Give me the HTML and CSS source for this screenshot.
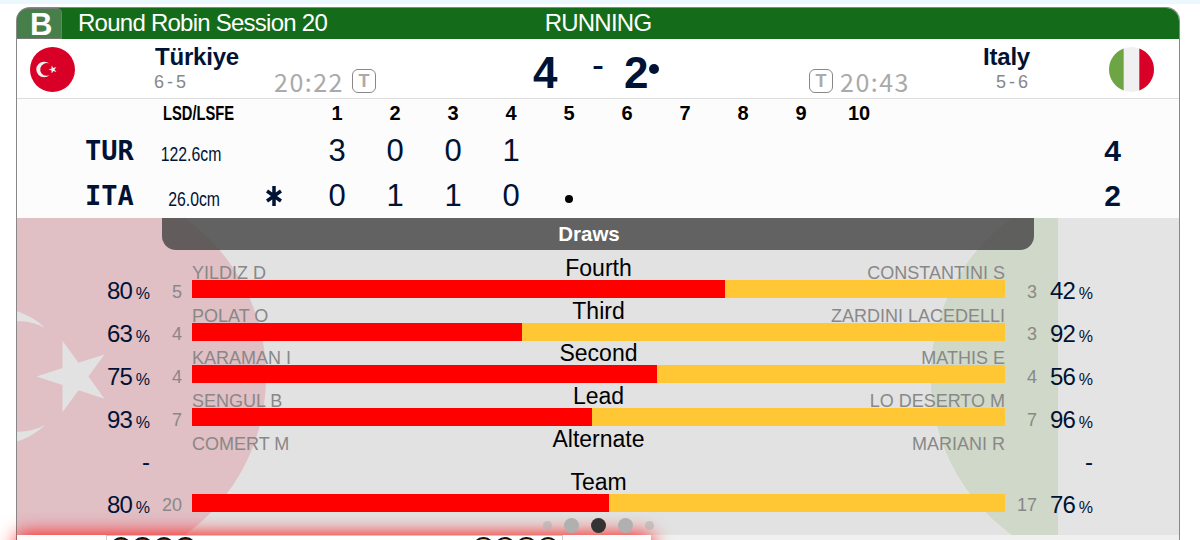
FILE: index.html
```
<!DOCTYPE html>
<html lang="en">
<head>
    <meta charset="UTF-8">
    <meta name="viewport" content="width=device-width, initial-scale=1.0">
    <title>Round Robin Session 20</title>
    <link rel="stylesheet" href="styles.css">
</head>
<body>
    <div class="game">
        <div class="game-header">
            <div class="sheet">B</div>
            <div class="session">Round Robin Session 20</div>
            <div class="status">RUNNING</div>
        </div>

        <div class="match">
            <svg class="flag" viewBox="0 0 512 512">
                <circle cx="256" cy="256" r="256" fill="#d80027"/>
                <g fill="#f0f0f0">
                    <path d="M245.5 209.2l21 28.9 34-11-21 28.9 21 29-34-11.1-21 28.9v-35.8l-34-11 34-11.1z"/>
                    <path d="M188.2 328.3a72.3 72.3 0 1 1 34.4-136 89 89 0 1 0 0 127.3a72 72 0 0 1-34.4 8.7z"/>
                </g>
            </svg>
            <div class="team">
                <div class="team-name">Türkiye</div>
                <div class="record">6 - 5</div>
            </div>
            <div class="clock"><span>20:22</span><span class="timeout">T</span></div>
            <div class="score">
                <span class="points">4</span>
                <span class="dash">-</span>
                <span class="points">2</span>
                <span class="hammer"></span>
            </div>
            <div class="clock"><span class="timeout">T</span><span>20:43</span></div>
            <div class="team team-right">
                <div class="team-name">Italy</div>
                <div class="record">5 - 6</div>
            </div>
            <svg class="flag" viewBox="0 0 512 512">
                <circle cx="256" cy="256" r="256" fill="#f0f0f0"/>
                <path d="M167 16a256 256 0 0 0 0 480z" fill="#6da544"/>
                <path d="M345 16a256 256 0 0 1 0 480z" fill="#d80027"/>
            </svg>
        </div>

        <div class="ends">
            <div class="ends-row ends-head">
                <span></span><span class="lsd">LSD/LSFE</span><span></span>
                <span>1</span><span>2</span><span>3</span><span>4</span><span>5</span>
                <span>6</span><span>7</span><span>8</span><span>9</span><span>10</span>
            </div>
            <div class="ends-row">
                <span class="code">TUR</span><span class="lsd">122.6cm</span><span></span>
                <span>3</span><span>0</span><span>0</span><span>1</span><span></span>
                <span></span><span></span><span></span><span></span><span></span>
                <span class="total">4</span>
            </div>
            <div class="ends-row">
                <span class="code">ITA</span><span class="lsd">26.0cm</span>
                <span class="star"><svg width="16" height="20" viewBox="0 0 16 20"><path d="M8 0v20M1 5l14 10M15 5L1 15"/></svg></span>
                <span>0</span><span>1</span><span>1</span><span>0</span><span class="current"><i></i></span>
                <span></span><span></span><span></span><span></span><span></span>
                <span class="total">2</span>
            </div>
        </div>

        <div class="stats">
            <svg class="backdrop backdrop-left" viewBox="0 0 512 512">
                <path fill-rule="evenodd" fill="#d80027" d="M256 0a256 256 0 1 1 0 512a256 256 0 1 1 0-512zM245.5 209.2l21 28.9 34-11-21 28.9 21 29-34-11.1-21 28.9v-35.8l-34-11 34-11.1zM188.2 328.3a72.3 72.3 0 1 1 34.4-136 89 89 0 1 0 0 127.3a72 72 0 0 1-34.4 8.7z"/>
            </svg>
            <svg class="backdrop backdrop-right" viewBox="0 0 512 512">
                <circle cx="256" cy="256" r="256" fill="#f0f0f0"/>
                <path d="M169 16a256 256 0 0 0 0 480z" fill="#6da544"/>
            </svg>

            <div class="stats-title">Draws</div>

            <div class="stat">
                <div class="pct">80<small>%</small></div>
                <div class="count">5</div>
                <div class="duel">
                    <div class="names"><span>YILDIZ D</span><b>Fourth</b><span>CONSTANTINI S</span></div>
                    <div class="bar"><div class="fill" style="width: 65.57%"></div></div>
                </div>
                <div class="count">3</div>
                <div class="pct">42<small>%</small></div>
            </div>
            <div class="stat">
                <div class="pct">63<small>%</small></div>
                <div class="count">4</div>
                <div class="duel">
                    <div class="names"><span>POLAT O</span><b>Third</b><span>ZARDINI LACEDELLI</span></div>
                    <div class="bar"><div class="fill" style="width: 40.65%"></div></div>
                </div>
                <div class="count">3</div>
                <div class="pct">92<small>%</small></div>
            </div>
            <div class="stat">
                <div class="pct">75<small>%</small></div>
                <div class="count">4</div>
                <div class="duel">
                    <div class="names"><span>KARAMAN I</span><b>Second</b><span>MATHIS E</span></div>
                    <div class="bar"><div class="fill" style="width: 57.25%"></div></div>
                </div>
                <div class="count">4</div>
                <div class="pct">56<small>%</small></div>
            </div>
            <div class="stat">
                <div class="pct">93<small>%</small></div>
                <div class="count">7</div>
                <div class="duel">
                    <div class="names"><span>SENGUL B</span><b>Lead</b><span>LO DESERTO M</span></div>
                    <div class="bar"><div class="fill" style="width: 49.21%"></div></div>
                </div>
                <div class="count">7</div>
                <div class="pct">96<small>%</small></div>
            </div>
            <div class="stat">
                <div class="pct">-</div>
                <div class="count"></div>
                <div class="duel">
                    <div class="names"><span>COMERT M</span><b>Alternate</b><span>MARIANI R</span></div>
                </div>
                <div class="count"></div>
                <div class="pct">-</div>
            </div>
            <div class="stat">
                <div class="pct">80<small>%</small></div>
                <div class="count">20</div>
                <div class="duel">
                    <div class="names"><span></span><b>Team</b><span></span></div>
                    <div class="bar"><div class="fill" style="width: 51.28%"></div></div>
                </div>
                <div class="count">17</div>
                <div class="pct">76<small>%</small></div>
            </div>

            <div class="pager">
                <i class="tiny"></i><i></i><i class="active"></i><i></i><i class="tiny"></i>
            </div>
        </div>

        <div class="footer">
            <div class="live">
                <div class="stones">
                    <div class="stone-set"><i></i><i></i><i></i><i></i></div>
                    <div class="stone-set yellow"><i></i><i></i><i></i><i></i></div>
                </div>
            </div>
        </div>
    </div>
</body>
</html>
```
FILE: styles.css
```
* {
    box-sizing: border-box;
}

body {
    margin: 0;
    height: 540px;
    overflow: hidden;
    border-top: 4px solid #ebf9ff;
    background: #fff;
    color: #001335;
    font-family: Arial, "Liberation Sans", sans-serif;
}

.game {
    width: 1164px;
    height: 533px;
    margin: 3px 0 0 16px;
    border: 1px solid #888;
    border-bottom: none;
    border-radius: 14px 14px 0 0;
    background: #fff;
}

/* green title bar */
.game-header {
    display: grid;
    grid-template-columns: 45px 476px 120px 1fr;
    height: 31px;
    background: #146c1a;
    border-radius: 13px 13px 0 0;
    color: #fff;
    font-size: 24px;
    letter-spacing: -0.75px;
    line-height: 30px;
}

.sheet {
    height: 31px;
    padding-left: 13px;
    border: 1px solid #777;
    border-left: none;
    border-radius: 12px 5px 0 0;
    background: #467f49;
    font-size: 31px;
    font-weight: bold;
    line-height: 32px;
}

.session {
    padding-left: 16px;
    white-space: nowrap;
}

.status {
    text-align: center;
}

/* teams and score */
.match {
    display: grid;
    grid-template-columns: 45px 199px 102px 433px 101px 199px 45px;
    height: 60px;
    padding: 8px 0 0 13px;
    border-bottom: 1px solid #ddd;
}

.flag {
    width: 45px;
    height: 45px;
}

.team {
    padding-left: 79px;
}

.team-right {
    padding: 0 78px 0 0;
    text-align: right;
}

.team-name {
    padding: 0 1px;
    font-size: 24px;
    font-weight: bold;
    letter-spacing: -0.2px;
    line-height: 20px;
}

.record {
    margin-top: 5px;
    padding-right: 3px;
    color: #888;
    font-size: 18px;
    line-height: 20px;
    word-spacing: -2px;
}

.clock {
    display: flex;
    align-items: center;
    justify-content: space-between;
    height: 26px;
    margin-top: 21px;
    color: #aaa;
    font-family: "Noto Sans CJK JP", sans-serif;
    font-size: 25px;
    letter-spacing: 1.5px;
    line-height: 24px;
    white-space: nowrap;
}

.timeout {
    width: 24px;
    height: 24px;
    border: 1px solid #888;
    border-radius: 6px;
    font: bold 18px/23px "Liberation Sans", sans-serif;
    letter-spacing: 0;
    text-align: center;
}

.score {
    display: flex;
    padding-left: 157px;
}

.points {
    width: 25px;
    font-size: 44px;
    font-weight: bold;
    line-height: 51px;
}

.dash {
    width: 66px;
    padding-left: 14px;
    text-align: center;
    font-size: 36px;
    line-height: 35px;
}

.hammer {
    width: 10px;
    height: 10px;
    margin-top: 17px;
    border-radius: 50%;
    background: #001335;
}

/* end by end */
.ends {
    background: #fcfcfc;
}

.ends-row {
    display: grid;
    grid-template-columns: 128px 75px 88px repeat(10, 58px) 1fr;
    height: 45px;
    font-size: 31px;
    line-height: 45px;
    text-align: center;
}

.ends-row.ends-head {
    height: 29px;
    color: #000;
    font-size: 20px;
    font-weight: bold;
    line-height: 29px;
}

.ends-row .code {
    padding-left: 68px;
    font-family: "DejaVu Sans Mono", monospace;
    font-size: 27px;
    font-weight: bold;
    text-align: left;
}

.ends-row .lsd {
    font-size: 20px;
    line-height: 52px;
    text-align: right;
    transform: scaleX(0.79);
    transform-origin: right;
}

.ends-head .lsd {
    justify-self: start;
    margin-left: 18px;
    line-height: 29px;
    transform: scaleX(0.735);
    transform-origin: left;
}

.star {
    padding-left: 20px;
}

.star path {
    stroke: #001335;
    stroke-width: 3.5;
}

.current {
    display: flex;
    align-items: center;
    justify-content: center;
}

.current i {
    width: 8px;
    height: 8px;
    border-radius: 50%;
    background: #000;
}

.total {
    padding-right: 58px;
    font-size: 30px;
    font-weight: bold;
    text-align: right;
}

/* statistics slide */
.stats {
    position: relative;
    height: 317px;
    overflow: hidden;
    background: #e2e2e2;
}

.backdrop {
    position: absolute;
    top: -37px;
    width: 391px;
    height: 391px;
    opacity: 0.15;
}

.backdrop-left {
    left: -142px;
}

.backdrop-right {
    left: 912px;
}

.stats-title {
    position: relative;
    width: 872px;
    height: 32px;
    margin: 0 0 5px 145px;
    padding-right: 18px;
    border-radius: 0 0 14px 14px;
    background: rgba(69, 69, 69, 0.82);
    color: #fff;
    font-size: 20.5px;
    font-weight: bold;
    line-height: 32px;
    text-align: center;
}

.stat {
    position: relative;
    display: grid;
    grid-template-columns: 132px 33px 823px 32px 55px;
    height: 42.74px;
}

.pct {
    padding-top: 24.4px;
    font-size: 24px;
    letter-spacing: -1px;
    line-height: 24px;
    text-align: right;
}

.pct small {
    margin-left: 4px;
    font-size: 16px;
}

.count {
    padding-top: 26.6px;
    color: #888;
    font-size: 18px;
    line-height: 20px;
    text-align: right;
}

.duel {
    margin-left: 10px;
}

.names {
    display: grid;
    grid-template-columns: 1fr auto 1fr;
    height: 25px;
    color: #888;
    font-size: 18px;
    line-height: 36px;
}

.names span:last-child {
    text-align: right;
}

.names b {
    color: #000;
    font-size: 23px;
    font-weight: normal;
    line-height: 26.6px;
}

.bar {
    height: 18px;
    background: #ffc733;
}

.fill {
    height: 18px;
    background: #f00;
}

/* dots stay above the glow of the live sheet */
.pager {
    position: relative;
    z-index: 1;
    display: flex;
    align-items: center;
    justify-content: center;
    gap: 12px;
    width: 1162px;
    margin-top: 6.6px;
}

.pager i {
    width: 15px;
    height: 15px;
    border-radius: 50%;
    background: #b0b0b0;
}

.pager .active {
    background: #333;
}

.pager .tiny {
    width: 9px;
    height: 9px;
    opacity: 0.6;
}

/* live sheet underneath */
.footer {
    height: 6px;
    background: #f0f0f0;
}

.live {
    position: relative;
    width: 634px;
    height: 60px;
    padding-left: 89px;
    background: #fcfcfc;
    box-shadow: 0 0 20px #f00;
}

.stones {
    display: flex;
    justify-content: space-between;
    width: 457px;
    height: 60px;
    padding: 1px 4px;
    border: 1px solid #ccc;
    background: #fff;
}

.stone-set {
    display: flex;
    gap: 1px;
}

.stone-set i {
    width: 20.4px;
    height: 20px;
    border: 2px solid #111;
    border-radius: 50%;
    background: #f00;
}

.yellow i {
    background: #ffd42a;
}
```
